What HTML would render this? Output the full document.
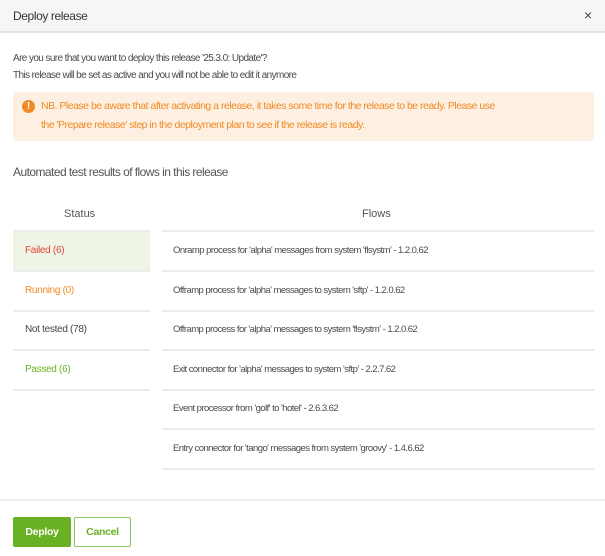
<!DOCTYPE html>
<html><head><style>
*{margin:0;padding:0;box-sizing:border-box}
body{width:605px;height:556px;background:#fff;font-family:"Liberation Sans",sans-serif;color:#4a4a4a;position:relative;overflow:hidden}
.a{position:absolute;white-space:nowrap}
.s{font-size:10px;letter-spacing:-0.6px}
.f{font-size:9.5px;letter-spacing:-0.55px}
.hdr{left:0;top:0;width:605px;height:33px;background:#f6f6f6;border-bottom:2px solid #e4e4e4}
.line{position:absolute;height:2px;background:#ececec}
</style></head><body>
<div class="a hdr"></div>
<div class="a" style="left:13px;top:9px;font-size:12px;letter-spacing:-0.4px;color:#333">Deploy release</div>
<div class="a" style="left:584px;top:7px;font-size:14px;color:#444">×</div>
<div class="a s" style="left:13px;top:53px">Are you sure that you want to deploy this release '25.3.0: Update'?</div>
<div class="a s" style="left:13px;top:70px">This release will be set as active and you will not be able to edit it anymore</div>
<div class="a" style="left:13px;top:92px;width:581px;height:49px;background:#fdf0e3;border-radius:3px"></div>
<div class="a" style="left:22px;top:100px;width:13px;height:13px;border-radius:50%;background:#f08a24;color:#fff;font-size:10px;font-weight:bold;text-align:center;line-height:13px">!</div>
<div class="a" style="left:41px;top:100px;font-size:10.5px;letter-spacing:-0.5px;color:#f08a24">NB. Please be aware that after activating a release, it takes some time for the release to be ready. Please use</div>
<div class="a" style="left:41px;top:119px;font-size:10.5px;letter-spacing:-0.5px;color:#f08a24">the 'Prepare release' step in the deployment plan to see if the release is ready.</div>
<div class="a" style="left:13px;top:165px;font-size:12px;letter-spacing:-0.55px;color:#555">Automated test results of flows in this release</div>
<div class="a" style="left:64px;top:208px;font-size:11px;color:#555">Status</div>
<div class="a" style="left:362px;top:208px;font-size:11px;color:#555">Flows</div>
<div class="line" style="left:13px;top:230px;width:137px"></div>
<div class="a" style="left:13px;top:232px;width:137px;height:38px;background:#eef5e6"></div>
<div class="line" style="left:13px;top:270px;width:137px"></div>
<div class="line" style="left:13px;top:310px;width:137px"></div>
<div class="line" style="left:13px;top:349px;width:137px"></div>
<div class="line" style="left:13px;top:389px;width:137px"></div>
<div class="a s" style="left:25px;top:245px;color:#e4453a;letter-spacing:-0.3px">Failed (6)</div>
<div class="a s" style="left:25px;top:285px;color:#f08a24;letter-spacing:-0.3px">Running (0)</div>
<div class="a s" style="left:25px;top:324px;color:#444;letter-spacing:-0.3px">Not tested (78)</div>
<div class="a s" style="left:25px;top:364px;color:#6ab023;letter-spacing:-0.3px">Passed (6)</div>
<div class="line" style="left:162px;top:230px;width:432px"></div>
<div class="line" style="left:162px;top:270px;width:432px"></div>
<div class="line" style="left:162px;top:310px;width:432px"></div>
<div class="line" style="left:162px;top:349px;width:432px"></div>
<div class="line" style="left:162px;top:389px;width:432px"></div>
<div class="line" style="left:162px;top:428px;width:432px"></div>
<div class="line" style="left:162px;top:468px;width:432px"></div>
<div class="a f" style="left:173px;top:245px">Onramp process for 'alpha' messages from system 'flsystm' - 1.2.0.62</div>
<div class="a f" style="left:173px;top:285px">Offramp process for 'alpha' messages to system 'sftp' - 1.2.0.62</div>
<div class="a f" style="left:173px;top:324px">Offramp process for 'alpha' messages to system 'flsystm' - 1.2.0.62</div>
<div class="a f" style="left:173px;top:364px">Exit connector for 'alpha' messages to system 'sftp' - 2.2.7.62</div>
<div class="a f" style="left:173px;top:403px">Event processor from 'golf' to 'hotel' - 2.6.3.62</div>
<div class="a f" style="left:173px;top:443px">Entry connector for 'tango' messages from system 'groovy' - 1.4.6.62</div>
<div class="line" style="left:0;top:499px;width:605px"></div>
<div class="a" style="left:13px;top:517px;width:58px;height:30px;background:#6ab023;border-radius:2px;color:#fff;font-size:10.5px;font-weight:bold;letter-spacing:-0.3px;text-align:center;line-height:30px">Deploy</div>
<div class="a" style="left:74px;top:517px;width:57px;height:30px;border:1px solid #8cc45a;border-radius:2px;color:#6ab023;font-size:10.5px;font-weight:bold;letter-spacing:-0.3px;text-align:center;line-height:28px">Cancel</div>
</body></html>
